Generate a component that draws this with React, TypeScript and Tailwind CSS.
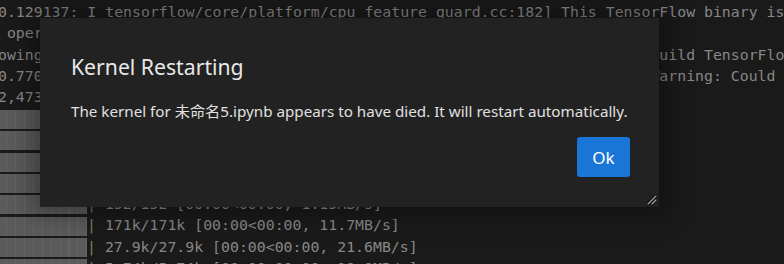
import React from "react";

const mono = { fontFamily: '"DejaVu Sans Mono", "Liberation Mono", monospace' };

const textLines = [
  "0.129137: I tensorflow/core/platform/cpu_feature_guard.cc:182] This TensorFlow binary is",
  " operations.",
  "owing instructions: AVX2 AVX512F AVX512_VNNI FMA, in other operations, rebuild TensorFlow with the appropriate compiler flags.",
  "0.770623: W tensorflow/compiler/tf2tensorrt/utils/py_utils.cc:38] TF-TRT Warning: Could not find TensorRT",
  "2,473 bytes",
];

const barLines = [
  "1.94k/1.94k [00:00<00:00, 2.01MB/s]",
  "499/499 [00:00<00:00, 512kB/s]",
  "4.78k/4.78k [00:00<00:00, 4.87MB/s]",
  "736/736 [00:00<00:00, 755kB/s]",
  "152/152 [00:00<00:00, 1.15MB/s]",
  "171k/171k [00:00<00:00, 11.7MB/s]",
  "27.9k/27.9k [00:00<00:00, 21.6MB/s]",
  "5.74k/5.74k [00:00<00:00, 19.0MB/s]",
];

function Grip() {
  return (
    <svg width="12" height="12" viewBox="0 0 12 12">
      <path d="M10 2 L2 10 M10 6 L6 10" stroke="#0c0c0c" strokeWidth="3.2" strokeLinecap="round" />
      <path d="M10 2 L2 10 M10 6 L6 10" stroke="#9a9a9a" strokeWidth="1.4" strokeLinecap="round" />
    </svg>
  );
}

export default function App() {
  return (
    <div className="relative w-[784px] h-[264px] overflow-hidden bg-[#1a1a1a]">
      <div
        className="ml-[-2px] pt-[2px] text-[14.85px] leading-[21.33px] text-[#878787] whitespace-pre"
        style={mono}
      >
        {textLines.map((l, i) => (
          <div key={i} className="h-[21.33px]">{l}</div>
        ))}
        {barLines.map((l, i) => (
          <div key={i} className="flex h-[21.33px] items-stretch">
            <div className="w-[89px] mt-[1.5px] mb-[1px] bg-[repeating-linear-gradient(90deg,#5b5b5b_0px,#5b5b5b_7.9px,#646464_7.9px,#646464_8.94px)]" />
            <span className="text-[#857b60]">|</span>
            <span> {l}</span>
          </div>
        ))}
      </div>

      <div
        className="absolute left-[40px] top-[18px] w-[619px] h-[189px] bg-[#222222] shadow-[0_0_24px_8px_rgba(0,0,0,0.35)] flex flex-col"
        style={{ fontFamily: '"Noto Sans", "Noto Sans CJK SC", sans-serif' }}
      >
        <div className="pl-[31px] pt-[35px] text-[21.2px] leading-[28px] text-[#e8e8e8]">
          Kernel Restarting
        </div>
        <div className="pl-[31px] pt-[20px] text-[15.2px] leading-[20px] text-[#e0e0e0] whitespace-nowrap">
          The kernel for 未命名5.ipynb appears to have died. It will restart automatically.
        </div>
        <div className="flex justify-end pr-[29px] pt-[16px]">
          <button className="w-[53px] h-[40px] rounded-[3px] bg-[#1a76d6] text-white text-[17px] leading-none">
            Ok
          </button>
        </div>
        <div className="absolute right-[1px] bottom-[1px]">
          <Grip />
        </div>
      </div>
    </div>
  );
}
